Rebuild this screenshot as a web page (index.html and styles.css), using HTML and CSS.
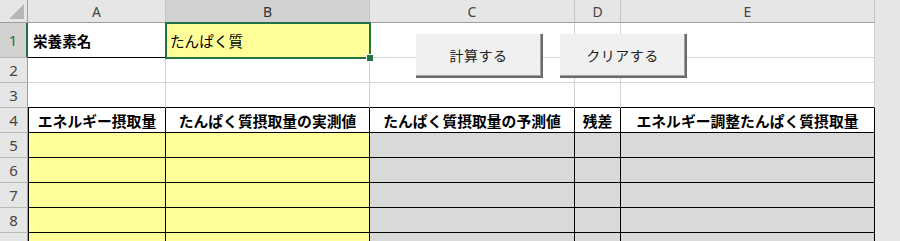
FILE: index.html
```html
<!DOCTYPE html>
<html lang="ja">
<head>
  <meta charset="UTF-8">
  <title>たんぱく質 エネルギー調整</title>
  <link rel="stylesheet" href="styles.css">
</head>
<body>
  <div class="sheet">
    <!-- 列見出し -->
    <div class="corner">
      <svg width="28" height="23" viewBox="0 0 28 23"><polygon points="9,19 24,19 24,4" fill="#b7b7b7"/></svg>
    </div>
    <div class="colhead">A</div>
    <div class="colhead sel">B</div>
    <div class="colhead">C</div>
    <div class="colhead">D</div>
    <div class="colhead">E</div>
    <div class="gutter"></div>

    <!-- 1 -->
    <div class="rowhead sel">1</div>
    <div class="cell label">栄養素名</div>
    <div class="cell input">たんぱく質</div>
    <div class="cell"></div>
    <div class="cell"></div>
    <div class="cell"></div>
    <div class="gutter"></div>

    <!-- 2 -->
    <div class="rowhead">2</div>
    <div class="cell"></div>
    <div class="cell"></div>
    <div class="cell"></div>
    <div class="cell"></div>
    <div class="cell"></div>
    <div class="gutter"></div>

    <!-- 3 -->
    <div class="rowhead">3</div>
    <div class="cell edge"></div>
    <div class="cell edge"></div>
    <div class="cell edge"></div>
    <div class="cell edge"></div>
    <div class="cell edge"></div>
    <div class="gutter"></div>

    <!-- 4 見出し -->
    <div class="rowhead">4</div>
    <div class="cell tbl first head">エネルギー摂取量</div>
    <div class="cell tbl head">たんぱく質摂取量の実測値</div>
    <div class="cell tbl head">たんぱく質摂取量の予測値</div>
    <div class="cell tbl head">残差</div>
    <div class="cell tbl head">エネルギー調整たんぱく質摂取量</div>
    <div class="gutter"></div>

    <!-- 5 - 9 -->
    <div class="rowhead">5</div>
    <div class="cell tbl first yellow"></div>
    <div class="cell tbl yellow"></div>
    <div class="cell tbl grey"></div>
    <div class="cell tbl grey"></div>
    <div class="cell tbl grey"></div>
    <div class="gutter"></div>

    <div class="rowhead">6</div>
    <div class="cell tbl first yellow"></div>
    <div class="cell tbl yellow"></div>
    <div class="cell tbl grey"></div>
    <div class="cell tbl grey"></div>
    <div class="cell tbl grey"></div>
    <div class="gutter"></div>

    <div class="rowhead">7</div>
    <div class="cell tbl first yellow"></div>
    <div class="cell tbl yellow"></div>
    <div class="cell tbl grey"></div>
    <div class="cell tbl grey"></div>
    <div class="cell tbl grey"></div>
    <div class="gutter"></div>

    <div class="rowhead">8</div>
    <div class="cell tbl first yellow"></div>
    <div class="cell tbl yellow"></div>
    <div class="cell tbl grey"></div>
    <div class="cell tbl grey"></div>
    <div class="cell tbl grey"></div>
    <div class="gutter"></div>

    <div class="rowhead">9</div>
    <div class="cell tbl first yellow"></div>
    <div class="cell tbl yellow"></div>
    <div class="cell tbl grey"></div>
    <div class="cell tbl grey"></div>
    <div class="cell tbl grey"></div>
    <div class="gutter"></div>

    <!-- 選択セル -->
    <div class="selection"><span class="handle"></span></div>

    <!-- ボタン -->
    <button class="btn calc">計算する</button>
    <button class="btn clear">クリアする</button>
  </div>
</body>
</html>
```

FILE: styles.css
```css
* {
  box-sizing: border-box;
  margin: 0;
  padding: 0;
}
body {
  background: #fff;
  font-family: "Noto Sans CJK JP", "Noto Sans", sans-serif;
}
.sheet {
  position: relative;
  display: grid;
  grid-template-columns: 28px 138px 204px 205px 46px 254px 25px;
  grid-template-rows: 23px 35px repeat(8, 25px);
  width: 900px;
  height: 241px;
  overflow: hidden;
}
/* 見出し */
.corner {
  background: #e6e6e6;
  border-right: 1px solid #9e9e9e;
  border-bottom: 1px solid #9e9e9e;
}
.corner svg { display: block; }
.colhead {
  display: flex;
  align-items: center;
  justify-content: center;
  background: #e6e6e6;
  border-right: 1px solid #c4c4c4;
  border-bottom: 1px solid #9e9e9e;
  color: #444;
  font-family: "Noto Sans", sans-serif;
  font-size: 14px;
}
.colhead.sel { background: #d2d2d2; color: #333; }
.rowhead {
  display: flex;
  align-items: center;
  justify-content: center;
  background: #e6e6e6;
  border-right: 1px solid #9e9e9e;
  border-bottom: 1px solid #b9b9b9;
  color: #444;
  font-family: "Noto Sans", sans-serif;
  font-size: 15px;
}
.rowhead.sel {
  background: #d2d2d2;
  color: #217346;
  border-right: 2px solid #217346;
}
.gutter { background: #e6e6e6; }
/* セル */
.cell {
  display: flex;
  align-items: center;
  border-right: 1px solid #d4d4d4;
  border-bottom: 1px solid #d4d4d4;
  font-size: 14.6px;
  color: #000;
  white-space: nowrap;
}
.label {
  font-weight: bold;
  padding-left: 5px;
  border-bottom-color: #000;
}
.input {
  background: #ffff99;
  padding-left: 4px;
}
.edge { border-bottom-color: #000; }
.tbl {
  border-right-color: #000;
  border-bottom-color: #000;
}
.tbl.first { border-left: 1px solid #000; }
.head {
  justify-content: center;
  font-weight: bold;
  font-size: 14.8px;
}
.yellow { background: #ffff99; }
.grey { background: #d9d9d9; }
/* 選択 */
.selection {
  position: absolute;
  left: 165px;
  top: 22px;
  width: 206px;
  height: 37px;
  border: 2px solid #217346;
}
.handle {
  position: absolute;
  right: -4px;
  bottom: -4px;
  width: 6px;
  height: 6px;
  background: #217346;
  outline: 1px solid #fff;
}
/* ボタン */
.btn {
  position: absolute;
  top: 34px;
  width: 127px;
  height: 44px;
  background: #f0f0f0;
  border: none;
  border-right: 2px solid #6a6a6a;
  border-bottom: 2px solid #6a6a6a;
  box-shadow: inset -1px -1px 0 #a0a0a0;
  color: #222;
  font-family: "Noto Sans CJK JP", sans-serif;
  font-size: 14px;
  letter-spacing: 0.5px;
}
.calc { left: 416px; }
.clear { left: 560px; }
```
